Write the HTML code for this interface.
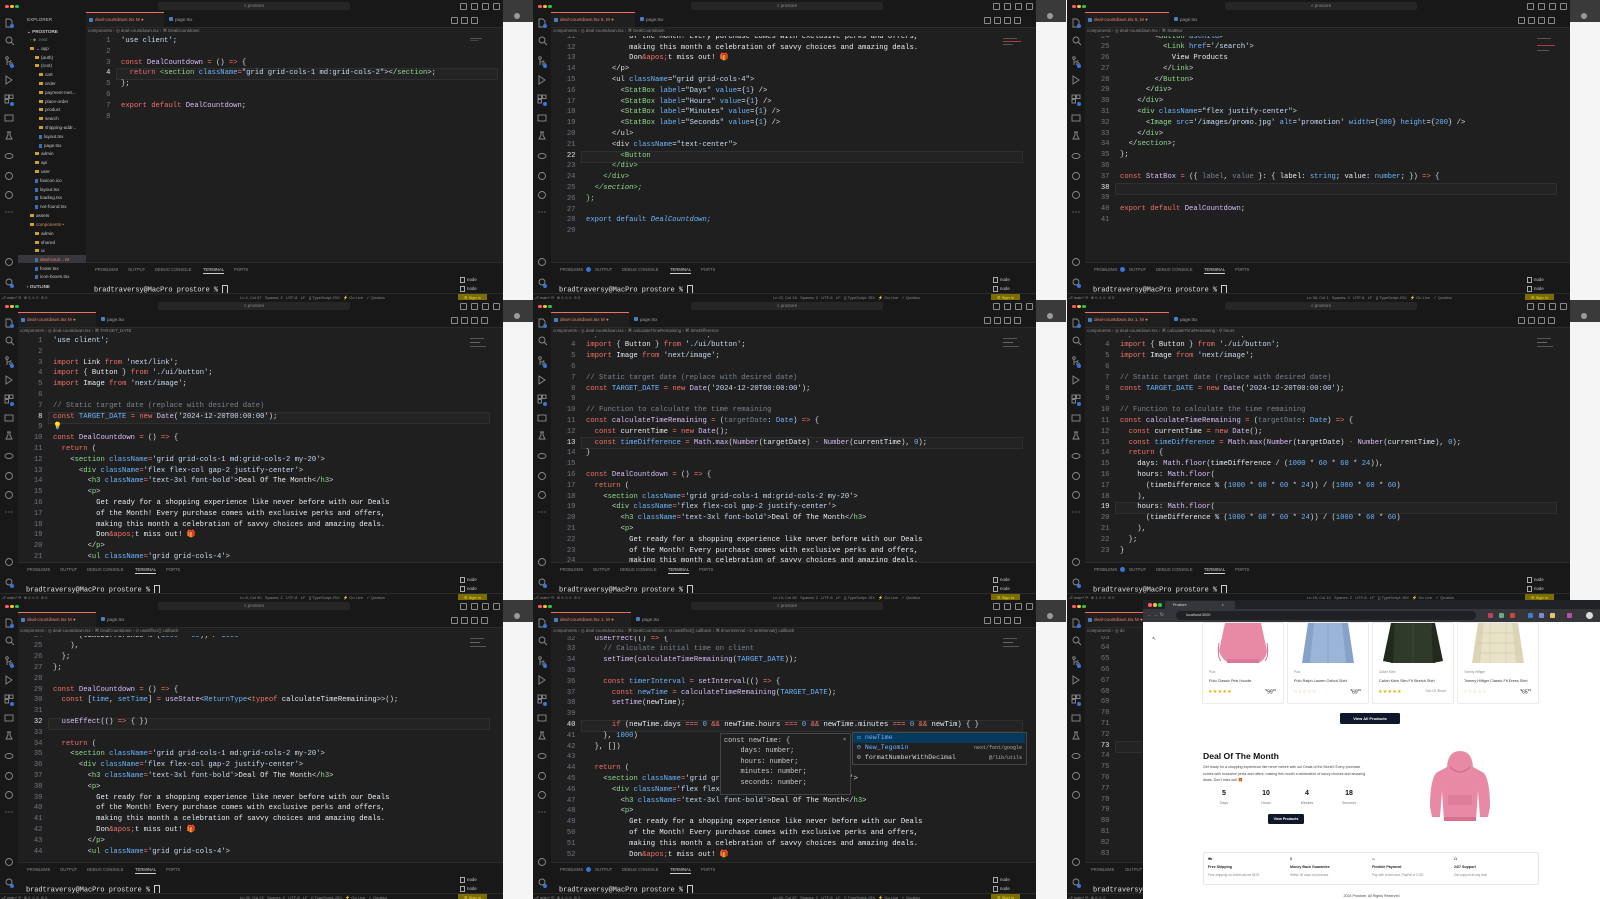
<!DOCTYPE html>
<html><head><meta charset="utf-8">
<style>
body{margin:0;width:1600px;height:899px;overflow:hidden;background:#f2f2f2;position:relative;font-family:"Liberation Sans",sans-serif}
.T{position:absolute;width:533px;height:300px;overflow:hidden}
.G{position:absolute;left:503px;top:0;width:30px;height:300px;background:#f5f5f5}
.G i{position:absolute;left:0;top:0;width:30px;height:22px;background:#3a3a3a}
.G b{position:absolute;left:11px;top:13px;width:6px;height:6px;border-radius:50%;background:#9a9a9a}
.W{position:absolute;left:0;top:0;width:503px;height:300px;background:#1f1f1f;overflow:hidden}
.tb{position:absolute;left:0;top:0;width:503px;height:12px;background:#181818;border-bottom:0.5px solid #2a2a2a}
.l{position:absolute;top:4.5px;width:3.5px;height:3.5px;border-radius:50%}
.srch{position:absolute;left:158px;top:2px;width:192px;height:8px;background:#262626;border-radius:2px;color:#8a8a8a;font-size:4.5px;line-height:8px;text-align:center}
.tbi{position:absolute;top:3px;width:5px;height:5px;border:0.6px solid #8a8a8a;border-radius:1px}
.ab{position:absolute;left:0;top:12px}
.ed{position:absolute;top:12px;right:0;height:281px}
.tabs{position:absolute;left:0;right:0;top:0;height:15px;background:#181818;border-bottom:0.5px solid #2b2b2b}
.tab{position:absolute;top:0;height:15px;font-size:4.6px;line-height:15px;color:#9a9a9a;padding-left:9px;box-sizing:border-box;white-space:nowrap}
.tab.act{background:#1f1f1f;border-top:1px solid #f47067;color:#e8836a;line-height:13px}
.tab::before{content:"";position:absolute;left:3px;top:5px;width:3.5px;height:4px;border-radius:1px;background:#4a7fbf}
.tabs .ic{position:absolute;top:5px;width:5px;height:5px;border:0.6px solid #8a8a8a;border-radius:1px}
.bc{position:absolute;left:2px;top:16px;font-size:4.4px;color:#8b8b8b;white-space:nowrap}
.cd{position:absolute;left:0;right:0;top:24px;height:226px;overflow:hidden}
pre{margin:0;font-family:"Liberation Mono",monospace;font-size:7.2px;line-height:10.8px}
.ln{position:absolute;left:0;width:24.5px;text-align:right;color:#6e7681}
.ln b{color:#e6e6e6;font-weight:normal}
.cx{position:absolute;left:35px;color:#d8dee4;white-space:pre}
.cur{position:absolute;left:30px;width:440px;height:10px;border:0.5px solid #2f2f2f;background:#232323}
.pn{position:absolute;left:0;right:0;top:250px;height:31px;background:#181818;border-top:0.5px solid #2b2b2b}
.pt{position:absolute;top:4px;font-size:4.2px;color:#8a8a8a;white-space:nowrap}
.pt u{text-decoration:none;color:#d0d0d0;border-bottom:0.6px solid #d0d0d0;padding-bottom:1px}
.bd{display:inline-block;width:5px;height:5px;border-radius:50%;background:#3a74d8;vertical-align:middle;margin-left:2px}
.term{position:absolute;left:8px;top:22px;font:6.9px/8px "Liberation Mono",monospace;color:#e4e4e4;white-space:pre}
.term span{display:inline-block;width:3.5px;height:7px;border:0.6px solid #ccc;vertical-align:middle}
.nd{position:absolute;left:460px;font-size:4.4px;color:#c8c8c8}
.nd::before{content:"";display:inline-block;width:3px;height:3.5px;border:0.5px solid #aaa;margin-right:2px;vertical-align:middle}
.sb{position:absolute;left:0;width:503px;top:293px;height:7px;background:#181818;border-top:0.5px solid #2b2b2b;font-size:4px;line-height:7px;color:#8a8a8a;white-space:nowrap}
.sb .r{position:absolute;left:240px}
.sb .si{position:absolute;left:458px;top:0;width:29px;height:7px;background:#7b6d00;color:#f3dc3c;text-align:center}
.mm{position:absolute;left:470px;height:1px}
.k{color:#f47067}.v{color:#6cb6ff}.s{color:#c6ddf7}.t{color:#8ddb8c}.a{color:#6cb6ff}.c{color:#768390}.f{color:#dcbdfb}.n{color:#6cb6ff}.w{color:#e6edf3}
.sd{position:absolute;left:18px;top:12px;width:68px;height:281px;background:#181818;font-size:4.6px;color:#c4c4c4}
.sd div{position:absolute;white-space:nowrap}
.sd .fo::before{content:"";display:inline-block;width:4px;height:3px;background:#c9a227;margin-right:2px;vertical-align:middle}
.sd .fi::before{content:"";display:inline-block;width:3px;height:4px;background:#3f6fb0;margin-right:2px;vertical-align:middle}
/* browser */
.br{position:absolute;left:76px;top:0;width:457px;height:299px;background:#fff;overflow:hidden}
.card{position:absolute;top:22px;width:80px;height:80px;border:0.5px solid #ececec;border-radius:2px;background:#fff}
.card .bn{position:absolute;left:6px;top:47px;font-size:3.2px;color:#888}
.card .nm{position:absolute;left:6px;top:56px;font-size:3.8px;color:#333;white-space:nowrap}
.card .st{position:absolute;left:5px;top:66px;font-size:5px;color:#e6b400;letter-spacing:0.3px}
.card .pr{position:absolute;right:7px;top:65px;font-size:5px;color:#222}
.card .os{position:absolute;right:7px;top:66px;font-size:3.6px;color:#888}
.btn{position:absolute;background:#0f172a;color:#fff;border-radius:1.5px;text-align:center;font-size:4px;font-weight:bold}
.num{position:absolute;width:30px;text-align:center;font-weight:bold;font-size:7px;color:#111}
.lab{position:absolute;width:30px;text-align:center;font-size:3.6px;color:#777}
.ft{position:absolute;font-size:3.6px;color:#222}
</style></head><body>

<!-- ================= TILE r1c1 ================= -->
<div class="T" style="left:0;top:0">
<div class="G"><i></i><b></b></div>
<div class="W">
 <div class="tb"><div class="l" style="left:5px;background:#ff5f57"></div><div class="l" style="left:10px;background:#febc2e"></div><div class="l" style="left:15px;background:#28c840"></div>
 <div class="srch">⌕ prostore</div><div class="tbi" style="left:460px"></div><div class="tbi" style="left:471px"></div><div class="tbi" style="left:482px"></div><div class="tbi" style="left:493px"></div></div>
 <svg class="ab" width="18" height="281"><rect width="18" height="281" fill="#181818"/><g fill="none" stroke="#8b8b8b" stroke-width="0.9"><path d="M6 7h4l2 2v6H6z"/><circle cx="9" cy="28" r="3"/><path d="M11 30l3 3"/><circle cx="7" cy="46" r="1.3"/><circle cx="11" cy="52" r="1.3"/><path d="M7 47v6M7 50q4 0 4-2"/><path d="M6 64l6 4-6 4z"/><rect x="5" y="83" width="3.5" height="3.5"/><rect x="9.5" y="83" width="3.5" height="3.5"/><rect x="5" y="87.5" width="3.5" height="3.5"/><rect x="5" y="103" width="8" height="6"/><path d="M7 120h4M8 120v3l-2 4h6l-2-4v-3"/><ellipse cx="9" cy="144" rx="4" ry="2.5"/><circle cx="9" cy="164" r="3.5"/><circle cx="9" cy="183" r="3.5"/><circle cx="9" cy="250" r="3.5"/><circle cx="9" cy="270" r="3"/></g><g fill="#3a74d8"><circle cx="12" cy="14" r="2"/><circle cx="12" cy="54" r="2"/><circle cx="12" cy="92" r="2"/><circle cx="12" cy="274" r="2"/></g><g fill="#8b8b8b"><circle cx="6" cy="200" r="0.6"/><circle cx="9" cy="200" r="0.6"/><circle cx="12" cy="200" r="0.6"/></g></svg>
 <div class="sd">
  <div style="left:9px;top:5px;color:#bbb">EXPLORER</div>
  <div style="left:9px;top:17px;font-weight:bold">⌄ PROSTORE</div>
  <div style="left:12px;top:25px;color:#777">› ◆ .next</div>
  <div class="fo" style="left:12px;top:34px">⌄ app</div>
  <div class="fo" style="left:17px;top:43px">(auth)</div>
  <div class="fo" style="left:17px;top:51px">(root)</div>
  <div class="fo" style="left:21px;top:60px">cart</div>
  <div class="fo" style="left:21px;top:69px">order</div>
  <div class="fo" style="left:21px;top:78px">payment-met...</div>
  <div class="fo" style="left:21px;top:87px">place-order</div>
  <div class="fo" style="left:21px;top:95px">product</div>
  <div class="fo" style="left:21px;top:104px">search</div>
  <div class="fo" style="left:21px;top:113px">shipping-addr...</div>
  <div class="fi" style="left:21px;top:122px">layout.tsx</div>
  <div class="fi" style="left:21px;top:131px">page.tsx</div>
  <div class="fo" style="left:17px;top:139px">admin</div>
  <div class="fo" style="left:17px;top:148px">api</div>
  <div class="fo" style="left:17px;top:157px">user</div>
  <div class="fi" style="left:17px;top:166px">favicon.ico</div>
  <div class="fi" style="left:17px;top:175px">layout.tsx</div>
  <div class="fi" style="left:17px;top:183px">loading.tsx</div>
  <div class="fi" style="left:17px;top:192px">not-found.tsx</div>
  <div class="fo" style="left:12px;top:201px">assets</div>
  <div class="fo" style="left:12px;top:210px;color:#d9915a">components •</div>
  <div class="fo" style="left:17px;top:219px">admin</div>
  <div class="fo" style="left:17px;top:228px">shared</div>
  <div class="fo" style="left:17px;top:236px">ui</div>
  <div style="left:0;top:243px;width:68px;height:8px;background:#37373d"></div>
  <div class="fi" style="left:17px;top:245px;color:#e8836a">deal-coun... M</div>
  <div class="fi" style="left:17px;top:254px">footer.tsx</div>
  <div class="fi" style="left:17px;top:262px">icon-boxes.tsx</div>
  <div style="left:9px;top:272px;font-weight:bold">› OUTLINE</div>
 </div>
 <div class="ed" style="left:86px">
  <div class="tabs"><div class="tab act" style="left:0;width:78px">deal-countdown.tsx M ●</div><div class="tab" style="left:80px;width:44px">page.tsx</div><div class="ic" style="left:365px"></div><div class="ic" style="left:375px"></div><div class="ic" style="left:385px"></div></div>
  <div class="bc">components › ◎ deal-countdown.tsx › ⌘ DealCountdown</div>
  <div class="cd">
   <div class="cur" style="top:32.4px;width:380px"></div>
   <pre class="ln">1
2
3
<b>4</b>
5
6
7
8</pre>
<pre class="cx"><span class="s">'use client'</span>;

<span class="k">const</span> <span class="f">DealCountdown</span> <span class="k">=</span> () <span class="k">=&gt;</span> {
  <span class="k">return</span> <span class="t">&lt;section</span> <span class="a">className</span><span class="k">=</span><span class="s">"grid grid-cols-1 md:grid-cols-2"</span>&gt;&lt;/<span class="t">section</span>&gt;;
};

<span class="k">export default</span> <span class="f">DealCountdown</span>;
</pre>
  </div>
  <div class="pn"><div class="pt" style="left:9px">PROBLEMS</div><div class="pt" style="left:42px">OUTPUT</div><div class="pt" style="left:69px">DEBUG CONSOLE</div><div class="pt" style="left:117px"><u>TERMINAL</u></div><div class="pt" style="left:148px">PORTS</div>
  <div class="term">bradtraversy@MacPro prostore % <span></span></div></div>
 </div>
 <div class="nd" style="top:277px">node</div><div class="nd" style="top:286px">node</div>
 <div class="mm" style="top:38px;width:12px;background:#555"></div><div class="mm" style="top:40px;width:8px;background:#444"></div>
 <div class="sb">&nbsp;⎇ main* ⟳ &nbsp;⊗ 0 ⚠ 0 &nbsp;⊘ 0<span class="r">Ln 4, Col 87 &nbsp; Spaces: 2 &nbsp; UTF-8 &nbsp; LF &nbsp; {} TypeScript JSX &nbsp; ⚡ Go Live &nbsp; ✓ Quokka</span><span class="si">⚙ Sign in</span></div>
</div></div>

<!-- ================= TILE r1c2 ================= -->
<div class="T" style="left:533px;top:0">
<div class="G"><i></i><b></b></div>
<div class="W">
 <div class="tb"><div class="l" style="left:5px;background:#ff5f57"></div><div class="l" style="left:10px;background:#febc2e"></div><div class="l" style="left:15px;background:#28c840"></div>
 <div class="srch">⌕ prostore</div><div class="tbi" style="left:460px"></div><div class="tbi" style="left:471px"></div><div class="tbi" style="left:482px"></div><div class="tbi" style="left:493px"></div></div>
 <svg class="ab" width="18" height="281"><rect width="18" height="281" fill="#181818"/><g fill="none" stroke="#8b8b8b" stroke-width="0.9"><path d="M6 7h4l2 2v6H6z"/><circle cx="9" cy="28" r="3"/><path d="M11 30l3 3"/><circle cx="7" cy="46" r="1.3"/><circle cx="11" cy="52" r="1.3"/><path d="M7 47v6M7 50q4 0 4-2"/><path d="M6 64l6 4-6 4z"/><rect x="5" y="83" width="3.5" height="3.5"/><rect x="9.5" y="83" width="3.5" height="3.5"/><rect x="5" y="87.5" width="3.5" height="3.5"/><rect x="5" y="103" width="8" height="6"/><path d="M7 120h4M8 120v3l-2 4h6l-2-4v-3"/><ellipse cx="9" cy="144" rx="4" ry="2.5"/><circle cx="9" cy="164" r="3.5"/><circle cx="9" cy="183" r="3.5"/><circle cx="9" cy="250" r="3.5"/><circle cx="9" cy="270" r="3"/></g><g fill="#3a74d8"><circle cx="12" cy="14" r="2"/><circle cx="12" cy="54" r="2"/><circle cx="12" cy="92" r="2"/><circle cx="12" cy="274" r="2"/></g><g fill="#8b8b8b"><circle cx="6" cy="200" r="0.6"/><circle cx="9" cy="200" r="0.6"/><circle cx="12" cy="200" r="0.6"/></g></svg>
 <div class="ed" style="left:18px">
  <div class="tabs"><div class="tab act" style="left:0;width:84px">deal-countdown.tsx 5, M ●</div><div class="tab" style="left:86px;width:44px">page.tsx</div><div class="ic" style="left:433px"></div><div class="ic" style="left:443px"></div><div class="ic" style="left:453px"></div><div class="ic" style="left:463px"></div></div>
  <div class="bc">components › ◎ deal-countdown.tsx › ⌘ DealCountdown</div>
  <div class="cd">
   <div class="cur" style="top:114.5px"></div>
   <pre class="ln" style="margin-top:-4.2px">11
12
13
14
15
16
17
18
19
20
21
<b>22</b>
23
24
25
26
27
28
29</pre>
<pre class="cx" style="margin-top:-4.2px">          <span class="w">of the Month! Every purchase comes with exclusive perks and offers,</span>
          <span class="w">making this month a celebration of savvy choices and amazing deals.</span>
          <span class="w">Don</span><span class="k">&amp;apos;</span><span class="w">t miss out!</span> 🎁
      &lt;/p&gt;
      &lt;ul <span class="a">className</span>=<span class="s">"grid grid-cols-4"</span>&gt;
        &lt;<span class="t">StatBox</span> <span class="a">label</span>=<span class="s">"Days"</span> <span class="a">value</span>={<span class="n">1</span>} /&gt;
        &lt;<span class="t">StatBox</span> <span class="a">label</span>=<span class="s">"Hours"</span> <span class="a">value</span>={<span class="n">1</span>} /&gt;
        &lt;<span class="t">StatBox</span> <span class="a">label</span>=<span class="s">"Minutes"</span> <span class="a">value</span>={<span class="n">1</span>} /&gt;
        &lt;<span class="t">StatBox</span> <span class="a">label</span>=<span class="s">"Seconds"</span> <span class="a">value</span>={<span class="n">1</span>} /&gt;
      &lt;/ul&gt;
      &lt;div <span class="a">className</span>=<span class="s">"text-center"</span>&gt;
        <span class="t">&lt;Button</span>
      <span class="t">&lt;/div&gt;</span>
    <span class="t">&lt;/div&gt;</span>
  <span class="t"><i>&lt;/section&gt;;</i></span>
<span class="t">};</span>

<span class="a">export default</span> <span class="a"><i>DealCountdown;</i></span>
</pre>
  </div>
  <div class="pn"><div class="pt" style="left:9px">PROBLEMS <span class="bd"></span></div><div class="pt" style="left:44px">OUTPUT</div><div class="pt" style="left:71px">DEBUG CONSOLE</div><div class="pt" style="left:119px"><u>TERMINAL</u></div><div class="pt" style="left:150px">PORTS</div>
  <div class="term">bradtraversy@MacPro prostore % <span></span></div></div>
 </div>
 <div class="nd" style="top:277px">node</div><div class="nd" style="top:286px">node</div>
 <div class="mm" style="top:38px;width:14px;background:#555"></div><div class="mm" style="top:41px;width:18px;background:#a04040"></div><div class="mm" style="top:44px;width:10px;background:#555"></div>
 <div class="sb">&nbsp;⎇ main* ⟳ &nbsp;⊗ 0 ⚠ 0 &nbsp;⊘ 5<span class="r">Ln 22, Col 16 &nbsp; Spaces: 2 &nbsp; UTF-8 &nbsp; LF &nbsp; {} TypeScript JSX &nbsp; ⚡ Go Live &nbsp; ✓ Quokka</span><span class="si">⚙ Sign in</span></div>
</div></div>

<!-- ================= TILE r1c3 ================= -->
<div class="T" style="left:1067px;top:0">
<div class="G"><i></i><b></b></div>
<div class="W">
 <div class="tb"><div class="l" style="left:5px;background:#ff5f57"></div><div class="l" style="left:10px;background:#febc2e"></div><div class="l" style="left:15px;background:#28c840"></div>
 <div class="srch">⌕ prostore</div><div class="tbi" style="left:460px"></div><div class="tbi" style="left:471px"></div><div class="tbi" style="left:482px"></div><div class="tbi" style="left:493px"></div></div>
 <svg class="ab" width="18" height="281"><rect width="18" height="281" fill="#181818"/><g fill="none" stroke="#8b8b8b" stroke-width="0.9"><path d="M6 7h4l2 2v6H6z"/><circle cx="9" cy="28" r="3"/><path d="M11 30l3 3"/><circle cx="7" cy="46" r="1.3"/><circle cx="11" cy="52" r="1.3"/><path d="M7 47v6M7 50q4 0 4-2"/><path d="M6 64l6 4-6 4z"/><rect x="5" y="83" width="3.5" height="3.5"/><rect x="9.5" y="83" width="3.5" height="3.5"/><rect x="5" y="87.5" width="3.5" height="3.5"/><rect x="5" y="103" width="8" height="6"/><path d="M7 120h4M8 120v3l-2 4h6l-2-4v-3"/><ellipse cx="9" cy="144" rx="4" ry="2.5"/><circle cx="9" cy="164" r="3.5"/><circle cx="9" cy="183" r="3.5"/><circle cx="9" cy="250" r="3.5"/><circle cx="9" cy="270" r="3"/></g><g fill="#3a74d8"><circle cx="12" cy="14" r="2"/><circle cx="12" cy="54" r="2"/><circle cx="12" cy="92" r="2"/><circle cx="12" cy="274" r="2"/></g><g fill="#8b8b8b"><circle cx="6" cy="200" r="0.6"/><circle cx="9" cy="200" r="0.6"/><circle cx="12" cy="200" r="0.6"/></g></svg>
 <div class="ed" style="left:18px">
  <div class="tabs"><div class="tab act" style="left:0;width:84px">deal-countdown.tsx 5, M ●</div><div class="tab" style="left:86px;width:44px">page.tsx</div><div class="ic" style="left:433px"></div><div class="ic" style="left:443px"></div><div class="ic" style="left:453px"></div><div class="ic" style="left:463px"></div></div>
  <div class="bc">components › ◎ deal-countdown.tsx › ⌘ StatBox</div>
  <div class="cd">
   <div class="cur" style="top:146.7px"></div>
   <pre class="ln" style="margin-top:-4.5px">24
25
26
27
28
29
30
31
32
33
34
35
36
37
<b>38</b>
39
40
41</pre>
<pre class="cx" style="margin-top:-4.5px">        &lt;<span class="t">Button</span> <span class="a">asChild</span>&gt;
          &lt;<span class="t">Link</span> <span class="a">href</span>=<span class="s">'/search'</span>&gt;
            <span class="w">View Products</span>
          &lt;/<span class="t">Link</span>&gt;
        &lt;/<span class="t">Button</span>&gt;
      &lt;/<span class="t">div</span>&gt;
    &lt;/<span class="t">div</span>&gt;
    &lt;<span class="t">div</span> <span class="a">className</span>=<span class="s">"flex justify-center"</span>&gt;
      &lt;<span class="t">Image</span> <span class="a">src</span>=<span class="s">'/images/promo.jpg'</span> <span class="a">alt</span>=<span class="s">'promotion'</span> <span class="a">width</span>={<span class="n">300</span>} <span class="a">height</span>={<span class="n">200</span>} /&gt;
    &lt;/<span class="t">div</span>&gt;
  &lt;/<span class="t">section</span>&gt;;
};

<span class="k">const</span> <span class="f">StatBox</span> <span class="k">=</span> ({ <span class="c">label</span>, <span class="c">value</span> }: { <span class="w">label</span>: <span class="v">string</span>; <span class="w">value</span>: <span class="v">number</span>; }) <span class="k">=&gt;</span> {


<span class="k">export default</span> <span class="f">DealCountdown</span>;
</pre>
  </div>
  <div class="pn"><div class="pt" style="left:9px">PROBLEMS <span class="bd"></span></div><div class="pt" style="left:44px">OUTPUT</div><div class="pt" style="left:71px">DEBUG CONSOLE</div><div class="pt" style="left:119px"><u>TERMINAL</u></div><div class="pt" style="left:150px">PORTS</div>
  <div class="term">bradtraversy@MacPro prostore % <span></span></div></div>
 </div>
 <div class="nd" style="top:277px">node</div><div class="nd" style="top:286px">node</div>
 <div class="mm" style="top:38px;width:14px;background:#555"></div><div class="mm" style="top:45px;width:18px;background:#a04040"></div><div class="mm" style="top:50px;width:12px;background:#555"></div>
 <div class="sb">&nbsp;⎇ main* ⟳ &nbsp;⊗ 0 ⚠ 0 &nbsp;⊘ 5<span class="r">Ln 38, Col 1 &nbsp; Spaces: 2 &nbsp; UTF-8 &nbsp; LF &nbsp; {} TypeScript JSX &nbsp; ⚡ Go Live &nbsp; ✓ Quokka</span><span class="si">⚙ Sign in</span></div>
</div></div>

<!-- ================= TILE r2c1 ================= -->
<div class="T" style="left:0;top:300px">
<div class="G"><i></i><b></b></div>
<div class="W">
 <div class="tb"><div class="l" style="left:5px;background:#ff5f57"></div><div class="l" style="left:10px;background:#febc2e"></div><div class="l" style="left:15px;background:#28c840"></div>
 <div class="srch">⌕ prostore</div><div class="tbi" style="left:460px"></div><div class="tbi" style="left:471px"></div><div class="tbi" style="left:482px"></div><div class="tbi" style="left:493px"></div></div>
 <svg class="ab" width="18" height="281"><rect width="18" height="281" fill="#181818"/><g fill="none" stroke="#8b8b8b" stroke-width="0.9"><path d="M6 7h4l2 2v6H6z"/><circle cx="9" cy="28" r="3"/><path d="M11 30l3 3"/><circle cx="7" cy="46" r="1.3"/><circle cx="11" cy="52" r="1.3"/><path d="M7 47v6M7 50q4 0 4-2"/><path d="M6 64l6 4-6 4z"/><rect x="5" y="83" width="3.5" height="3.5"/><rect x="9.5" y="83" width="3.5" height="3.5"/><rect x="5" y="87.5" width="3.5" height="3.5"/><rect x="5" y="103" width="8" height="6"/><path d="M7 120h4M8 120v3l-2 4h6l-2-4v-3"/><ellipse cx="9" cy="144" rx="4" ry="2.5"/><circle cx="9" cy="164" r="3.5"/><circle cx="9" cy="183" r="3.5"/><circle cx="9" cy="250" r="3.5"/><circle cx="9" cy="270" r="3"/></g><g fill="#3a74d8"><circle cx="12" cy="14" r="2"/><circle cx="12" cy="54" r="2"/><circle cx="12" cy="92" r="2"/><circle cx="12" cy="274" r="2"/></g><g fill="#8b8b8b"><circle cx="6" cy="200" r="0.6"/><circle cx="9" cy="200" r="0.6"/><circle cx="12" cy="200" r="0.6"/></g></svg>
 <div class="ed" style="left:18px">
  <div class="tabs"><div class="tab act" style="left:0;width:78px">deal-countdown.tsx M ●</div><div class="tab" style="left:80px;width:44px">page.tsx</div><div class="ic" style="left:433px"></div><div class="ic" style="left:443px"></div><div class="ic" style="left:453px"></div><div class="ic" style="left:463px"></div></div>
  <div class="bc">components › ◎ deal-countdown.tsx › ⌘ TARGET_DATE</div>
  <div class="cd">
   <div class="cur" style="top:75.6px"></div>
   <pre class="ln">1
2
3
4
5
6
7
<b>8</b>
9
10
11
12
13
14
15
16
17
18
19
20
21</pre>
<pre class="cx"><span class="s">'use client'</span>;

<span class="k">import</span> <span class="w">Link</span> <span class="k">from</span> <span class="s">'next/link'</span>;
<span class="k">import</span> { <span class="w">Button</span> } <span class="k">from</span> <span class="s">'./ui/button'</span>;
<span class="k">import</span> <span class="w">Image</span> <span class="k">from</span> <span class="s">'next/image'</span>;

<span class="c">// Static target date (replace with desired date)</span>
<span class="k">const</span> <span class="v">TARGET_DATE</span> <span class="k">=</span> <span class="k">new</span> <span class="f">Date</span>(<span class="s">'2024-12-20T00:00:00'</span>);
<span style="color:#e6c300">💡</span>
<span class="k">const</span> <span class="f">DealCountdown</span> <span class="k">=</span> () <span class="k">=&gt;</span> {
  <span class="k">return</span> (
    &lt;<span class="t">section</span> <span class="a">className</span><span class="k">=</span><span class="s">'grid grid-cols-1 md:grid-cols-2 my-20'</span>&gt;
      &lt;<span class="t">div</span> <span class="a">className</span><span class="k">=</span><span class="s">'flex flex-col gap-2 justify-center'</span>&gt;
        &lt;<span class="t">h3</span> <span class="a">className</span><span class="k">=</span><span class="s">'text-3xl font-bold'</span>&gt;<span class="w">Deal Of The Month</span>&lt;/<span class="t">h3</span>&gt;
        &lt;<span class="t">p</span>&gt;
          <span class="w">Get ready for a shopping experience like never before with our Deals</span>
          <span class="w">of the Month! Every purchase comes with exclusive perks and offers,</span>
          <span class="w">making this month a celebration of savvy choices and amazing deals.</span>
          <span class="w">Don</span><span class="k">&amp;apos;</span><span class="w">t miss out!</span> 🎁
        &lt;/<span class="t">p</span>&gt;
        &lt;<span class="t">ul</span> <span class="a">className</span><span class="k">=</span><span class="s">'grid grid-cols-4'</span>&gt;
</pre>
  </div>
  <div class="pn"><div class="pt" style="left:9px">PROBLEMS</div><div class="pt" style="left:42px">OUTPUT</div><div class="pt" style="left:69px">DEBUG CONSOLE</div><div class="pt" style="left:117px"><u>TERMINAL</u></div><div class="pt" style="left:148px">PORTS</div>
  <div class="term">bradtraversy@MacPro prostore % <span></span></div></div>
 </div>
 <div class="nd" style="top:277px">node</div><div class="nd" style="top:286px">node</div>
 <div class="mm" style="top:38px;width:14px;background:#555"></div><div class="mm" style="top:42px;width:10px;background:#666"></div><div class="mm" style="top:46px;width:16px;background:#555"></div>
 <div class="sb">&nbsp;⎇ main* ⟳ &nbsp;⊗ 0 ⚠ 0 &nbsp;⊘ 0<span class="r">Ln 8, Col 50 &nbsp; Spaces: 2 &nbsp; UTF-8 &nbsp; LF &nbsp; {} TypeScript JSX &nbsp; ⚡ Go Live &nbsp; ✓ Quokka</span><span class="si">⚙ Sign in</span></div>
</div></div>

<!-- ================= TILE r2c2 ================= -->
<div class="T" style="left:533px;top:300px">
<div class="G"><i></i><b></b></div>
<div class="W">
 <div class="tb"><div class="l" style="left:5px;background:#ff5f57"></div><div class="l" style="left:10px;background:#febc2e"></div><div class="l" style="left:15px;background:#28c840"></div>
 <div class="srch">⌕ prostore</div><div class="tbi" style="left:460px"></div><div class="tbi" style="left:471px"></div><div class="tbi" style="left:482px"></div><div class="tbi" style="left:493px"></div></div>
 <svg class="ab" width="18" height="281"><rect width="18" height="281" fill="#181818"/><g fill="none" stroke="#8b8b8b" stroke-width="0.9"><path d="M6 7h4l2 2v6H6z"/><circle cx="9" cy="28" r="3"/><path d="M11 30l3 3"/><circle cx="7" cy="46" r="1.3"/><circle cx="11" cy="52" r="1.3"/><path d="M7 47v6M7 50q4 0 4-2"/><path d="M6 64l6 4-6 4z"/><rect x="5" y="83" width="3.5" height="3.5"/><rect x="9.5" y="83" width="3.5" height="3.5"/><rect x="5" y="87.5" width="3.5" height="3.5"/><rect x="5" y="103" width="8" height="6"/><path d="M7 120h4M8 120v3l-2 4h6l-2-4v-3"/><ellipse cx="9" cy="144" rx="4" ry="2.5"/><circle cx="9" cy="164" r="3.5"/><circle cx="9" cy="183" r="3.5"/><circle cx="9" cy="250" r="3.5"/><circle cx="9" cy="270" r="3"/></g><g fill="#3a74d8"><circle cx="12" cy="14" r="2"/><circle cx="12" cy="54" r="2"/><circle cx="12" cy="92" r="2"/><circle cx="12" cy="274" r="2"/></g><g fill="#8b8b8b"><circle cx="6" cy="200" r="0.6"/><circle cx="9" cy="200" r="0.6"/><circle cx="12" cy="200" r="0.6"/></g></svg>
 <div class="ed" style="left:18px">
  <div class="tabs"><div class="tab act" style="left:0;width:78px">deal-countdown.tsx M ●</div><div class="tab" style="left:80px;width:44px">page.tsx</div><div class="ic" style="left:433px"></div><div class="ic" style="left:443px"></div><div class="ic" style="left:453px"></div><div class="ic" style="left:463px"></div></div>
  <div class="bc">components › ◎ deal-countdown.tsx › ⌘ calculateTimeRemaining › ⌘ timeDifference</div>
  <div class="cd">
   <div class="cur" style="top:101.4px"></div>
   <pre class="ln" style="margin-top:-6.4px">3
4
5
6
7
8
9
10
11
12
<b>13</b>
14
15
16
17
18
19
20
21
22
23
24</pre>
<pre class="cx" style="margin-top:-6.4px"><span class="k">import</span> <span class="w">Link</span> <span class="k">from</span> <span class="s">'next/link'</span>;
<span class="k">import</span> { <span class="w">Button</span> } <span class="k">from</span> <span class="s">'./ui/button'</span>;
<span class="k">import</span> <span class="w">Image</span> <span class="k">from</span> <span class="s">'next/image'</span>;

<span class="c">// Static target date (replace with desired date)</span>
<span class="k">const</span> <span class="v">TARGET_DATE</span> <span class="k">=</span> <span class="k">new</span> <span class="f">Date</span>(<span class="s">'2024-12-20T00:00:00'</span>);

<span class="c">// Function to calculate the time remaining</span>
<span class="k">const</span> <span class="f">calculateTimeRemaining</span> <span class="k">=</span> (<span class="c">targetDate</span>: <span class="v">Date</span>) <span class="k">=&gt;</span> {
  <span class="k">const</span> <span class="w">currentTime</span> <span class="k">=</span> <span class="k">new</span> <span class="f">Date</span>();
  <span class="k">const</span> <span class="v">timeDifference</span> <span class="k">=</span> <span class="f">Math</span>.<span class="f">max</span>(<span class="f">Number</span>(<span class="w">targetDate</span>) <span class="k">-</span> <span class="f">Number</span>(<span class="w">currentTime</span>), <span class="n">0</span>);
}

<span class="k">const</span> <span class="f">DealCountdown</span> <span class="k">=</span> () <span class="k">=&gt;</span> {
  <span class="k">return</span> (
    &lt;<span class="t">section</span> <span class="a">className</span><span class="k">=</span><span class="s">'grid grid-cols-1 md:grid-cols-2 my-20'</span>&gt;
      &lt;<span class="t">div</span> <span class="a">className</span><span class="k">=</span><span class="s">'flex flex-col gap-2 justify-center'</span>&gt;
        &lt;<span class="t">h3</span> <span class="a">className</span><span class="k">=</span><span class="s">'text-3xl font-bold'</span>&gt;<span class="w">Deal Of The Month</span>&lt;/<span class="t">h3</span>&gt;
        &lt;<span class="t">p</span>&gt;
          <span class="w">Get ready for a shopping experience like never before with our Deals</span>
          <span class="w">of the Month! Every purchase comes with exclusive perks and offers,</span>
          <span class="w">making this month a celebration of savvy choices and amazing deals.</span>
</pre>
  </div>
  <div class="pn"><div class="pt" style="left:9px">PROBLEMS</div><div class="pt" style="left:42px">OUTPUT</div><div class="pt" style="left:69px">DEBUG CONSOLE</div><div class="pt" style="left:117px"><u>TERMINAL</u></div><div class="pt" style="left:148px">PORTS</div>
  <div class="term">bradtraversy@MacPro prostore % <span></span></div></div>
 </div>
 <div class="nd" style="top:277px">node</div><div class="nd" style="top:286px">node</div>
 <div class="mm" style="top:38px;width:14px;background:#555"></div><div class="mm" style="top:42px;width:10px;background:#666"></div><div class="mm" style="top:46px;width:16px;background:#555"></div>
 <div class="sb">&nbsp;⎇ main* ⟳ &nbsp;⊗ 0 ⚠ 0 &nbsp;⊘ 0<span class="r">Ln 13, Col 80 &nbsp; Spaces: 2 &nbsp; UTF-8 &nbsp; LF &nbsp; {} TypeScript JSX &nbsp; ⚡ Go Live &nbsp; ✓ Quokka</span><span class="si">⚙ Sign in</span></div>
</div></div>

<!-- ================= TILE r2c3 ================= -->
<div class="T" style="left:1067px;top:300px">
<div class="G"><i></i><b></b></div>
<div class="W">
 <div class="tb"><div class="l" style="left:5px;background:#ff5f57"></div><div class="l" style="left:10px;background:#febc2e"></div><div class="l" style="left:15px;background:#28c840"></div>
 <div class="srch">⌕ prostore</div><div class="tbi" style="left:460px"></div><div class="tbi" style="left:471px"></div><div class="tbi" style="left:482px"></div><div class="tbi" style="left:493px"></div></div>
 <svg class="ab" width="18" height="281"><rect width="18" height="281" fill="#181818"/><g fill="none" stroke="#8b8b8b" stroke-width="0.9"><path d="M6 7h4l2 2v6H6z"/><circle cx="9" cy="28" r="3"/><path d="M11 30l3 3"/><circle cx="7" cy="46" r="1.3"/><circle cx="11" cy="52" r="1.3"/><path d="M7 47v6M7 50q4 0 4-2"/><path d="M6 64l6 4-6 4z"/><rect x="5" y="83" width="3.5" height="3.5"/><rect x="9.5" y="83" width="3.5" height="3.5"/><rect x="5" y="87.5" width="3.5" height="3.5"/><rect x="5" y="103" width="8" height="6"/><path d="M7 120h4M8 120v3l-2 4h6l-2-4v-3"/><ellipse cx="9" cy="144" rx="4" ry="2.5"/><circle cx="9" cy="164" r="3.5"/><circle cx="9" cy="183" r="3.5"/><circle cx="9" cy="250" r="3.5"/><circle cx="9" cy="270" r="3"/></g><g fill="#3a74d8"><circle cx="12" cy="14" r="2"/><circle cx="12" cy="54" r="2"/><circle cx="12" cy="92" r="2"/><circle cx="12" cy="274" r="2"/></g><g fill="#8b8b8b"><circle cx="6" cy="200" r="0.6"/><circle cx="9" cy="200" r="0.6"/><circle cx="12" cy="200" r="0.6"/></g></svg>
 <div class="ed" style="left:18px">
  <div class="tabs"><div class="tab act" style="left:0;width:84px">deal-countdown.tsx 1, M ●</div><div class="tab" style="left:86px;width:44px">page.tsx</div><div class="ic" style="left:433px"></div><div class="ic" style="left:443px"></div><div class="ic" style="left:453px"></div><div class="ic" style="left:463px"></div></div>
  <div class="bc">components › ◎ deal-countdown.tsx › ⌘ calculateTimeRemaining › ⚲ hours</div>
  <div class="cd">
   <div class="cur" style="top:166.2px"></div>
   <pre class="ln" style="margin-top:-6.4px">3
4
5
6
7
8
9
10
11
12
13
14
15
16
17
18
<b>19</b>
20
21
22
23</pre>
<pre class="cx" style="margin-top:-6.4px"><span class="k">import</span> <span class="w">Link</span> <span class="k">from</span> <span class="s">'next/link'</span>;
<span class="k">import</span> { <span class="w">Button</span> } <span class="k">from</span> <span class="s">'./ui/button'</span>;
<span class="k">import</span> <span class="w">Image</span> <span class="k">from</span> <span class="s">'next/image'</span>;

<span class="c">// Static target date (replace with desired date)</span>
<span class="k">const</span> <span class="v">TARGET_DATE</span> <span class="k">=</span> <span class="k">new</span> <span class="f">Date</span>(<span class="s">'2024-12-20T00:00:00'</span>);

<span class="c">// Function to calculate the time remaining</span>
<span class="k">const</span> <span class="f">calculateTimeRemaining</span> <span class="k">=</span> (<span class="c">targetDate</span>: <span class="v">Date</span>) <span class="k">=&gt;</span> {
  <span class="k">const</span> <span class="w">currentTime</span> <span class="k">=</span> <span class="k">new</span> <span class="f">Date</span>();
  <span class="k">const</span> <span class="v">timeDifference</span> <span class="k">=</span> <span class="f">Math</span>.<span class="f">max</span>(<span class="f">Number</span>(<span class="w">targetDate</span>) <span class="k">-</span> <span class="f">Number</span>(<span class="w">currentTime</span>), <span class="n">0</span>);
  <span class="k">return</span> {
    <span class="w">days</span>: <span class="f">Math</span>.<span class="f">floor</span>(<span class="w">timeDifference</span> / (<span class="n">1000</span> * <span class="n">60</span> * <span class="n">60</span> * <span class="n">24</span>)),
    <span class="w">hours</span>: <span class="f">Math</span>.<span class="f">floor</span>(
      (<span class="w">timeDifference</span> % (<span class="n">1000</span> * <span class="n">60</span> * <span class="n">60</span> * <span class="n">24</span>)) / (<span class="n">1000</span> * <span class="n">60</span> * <span class="n">60</span>)
    ),
    <span class="w">hours</span>: <span class="f">Math</span>.<span class="f">floor</span>(
      (<span class="w">timeDifference</span> % (<span class="n">1000</span> * <span class="n">60</span> * <span class="n">60</span> * <span class="n">24</span>)) / (<span class="n">1000</span> * <span class="n">60</span> * <span class="n">60</span>)
    ),
  };
}
</pre>
  </div>
  <div class="pn"><div class="pt" style="left:9px">PROBLEMS <span class="bd"></span></div><div class="pt" style="left:44px">OUTPUT</div><div class="pt" style="left:71px">DEBUG CONSOLE</div><div class="pt" style="left:119px"><u>TERMINAL</u></div><div class="pt" style="left:150px">PORTS</div>
  <div class="term">bradtraversy@MacPro prostore % <span></span></div></div>
 </div>
 <div class="nd" style="top:277px">node</div><div class="nd" style="top:286px">node</div>
 <div class="mm" style="top:38px;width:14px;background:#555"></div><div class="mm" style="top:42px;width:10px;background:#666"></div><div class="mm" style="top:46px;width:16px;background:#555"></div>
 <div class="sb">&nbsp;⎇ main* ⟳ &nbsp;⊗ 1 ⚠ 0 &nbsp;⊘ 0<span class="r">Ln 19, Col 10 &nbsp; Spaces: 2 &nbsp; UTF-8 &nbsp; LF &nbsp; {} TypeScript JSX &nbsp; ⚡ Go Live &nbsp; ✓ Quokka</span><span class="si">⚙ Sign in</span></div>
</div></div>

<!-- ================= TILE r3c1 ================= -->
<div class="T" style="left:0;top:600px;height:299px">
<div class="G"><i></i><b></b></div>
<div class="W">
 <div class="tb"><div class="l" style="left:5px;background:#ff5f57"></div><div class="l" style="left:10px;background:#febc2e"></div><div class="l" style="left:15px;background:#28c840"></div>
 <div class="srch">⌕ prostore</div><div class="tbi" style="left:460px"></div><div class="tbi" style="left:471px"></div><div class="tbi" style="left:482px"></div><div class="tbi" style="left:493px"></div></div>
 <svg class="ab" width="18" height="281"><rect width="18" height="281" fill="#181818"/><g fill="none" stroke="#8b8b8b" stroke-width="0.9"><path d="M6 7h4l2 2v6H6z"/><circle cx="9" cy="28" r="3"/><path d="M11 30l3 3"/><circle cx="7" cy="46" r="1.3"/><circle cx="11" cy="52" r="1.3"/><path d="M7 47v6M7 50q4 0 4-2"/><path d="M6 64l6 4-6 4z"/><rect x="5" y="83" width="3.5" height="3.5"/><rect x="9.5" y="83" width="3.5" height="3.5"/><rect x="5" y="87.5" width="3.5" height="3.5"/><rect x="5" y="103" width="8" height="6"/><path d="M7 120h4M8 120v3l-2 4h6l-2-4v-3"/><ellipse cx="9" cy="144" rx="4" ry="2.5"/><circle cx="9" cy="164" r="3.5"/><circle cx="9" cy="183" r="3.5"/><circle cx="9" cy="250" r="3.5"/><circle cx="9" cy="270" r="3"/></g><g fill="#3a74d8"><circle cx="12" cy="14" r="2"/><circle cx="12" cy="54" r="2"/><circle cx="12" cy="92" r="2"/><circle cx="12" cy="274" r="2"/></g><g fill="#8b8b8b"><circle cx="6" cy="200" r="0.6"/><circle cx="9" cy="200" r="0.6"/><circle cx="12" cy="200" r="0.6"/></g></svg>
 <div class="ed" style="left:18px">
  <div class="tabs"><div class="tab act" style="left:0;width:78px">deal-countdown.tsx M ●</div><div class="tab" style="left:80px;width:44px">page.tsx</div><div class="ic" style="left:433px"></div><div class="ic" style="left:443px"></div><div class="ic" style="left:453px"></div><div class="ic" style="left:463px"></div></div>
  <div class="bc">components › ◎ deal-countdown.tsx › ⌘ DealCountdown › ⊙ useEffect() callback</div>
  <div class="cd">
   <div class="cur" style="top:81.6px"></div>
   <pre class="ln" style="margin-top:-5.4px">24
25
26
27
28
29
30
31
<b>32</b>
33
34
35
36
37
38
39
40
41
42
43
44</pre>
<pre class="cx" style="margin-top:-5.4px">      (<span class="w">timeDifference</span> % (<span class="n">1000</span> * <span class="n">60</span>)) / <span class="n">1000</span>
    ),
  };
};

<span class="k">const</span> <span class="f">DealCountdown</span> <span class="k">=</span> () <span class="k">=&gt;</span> {
  <span class="k">const</span> [<span class="v">time</span>, <span class="v">setTime</span>] <span class="k">=</span> <span class="f">useState</span>&lt;<span class="v">ReturnType</span>&lt;<span class="k">typeof</span> <span class="w">calculateTimeRemaining</span>&gt;&gt;();

  <span class="f">useEffect</span>(() <span class="k">=&gt;</span> { })

  <span class="k">return</span> (
    &lt;<span class="t">section</span> <span class="a">className</span><span class="k">=</span><span class="s">'grid grid-cols-1 md:grid-cols-2 my-20'</span>&gt;
      &lt;<span class="t">div</span> <span class="a">className</span><span class="k">=</span><span class="s">'flex flex-col gap-2 justify-center'</span>&gt;
        &lt;<span class="t">h3</span> <span class="a">className</span><span class="k">=</span><span class="s">'text-3xl font-bold'</span>&gt;<span class="w">Deal Of The Month</span>&lt;/<span class="t">h3</span>&gt;
        &lt;<span class="t">p</span>&gt;
          <span class="w">Get ready for a shopping experience like never before with our Deals</span>
          <span class="w">of the Month! Every purchase comes with exclusive perks and offers,</span>
          <span class="w">making this month a celebration of savvy choices and amazing deals.</span>
          <span class="w">Don</span><span class="k">&amp;apos;</span><span class="w">t miss out!</span> 🎁
        &lt;/<span class="t">p</span>&gt;
        &lt;<span class="t">ul</span> <span class="a">className</span><span class="k">=</span><span class="s">'grid grid-cols-4'</span>&gt;
</pre>
  </div>
  <div class="pn"><div class="pt" style="left:9px">PROBLEMS</div><div class="pt" style="left:42px">OUTPUT</div><div class="pt" style="left:69px">DEBUG CONSOLE</div><div class="pt" style="left:117px"><u>TERMINAL</u></div><div class="pt" style="left:148px">PORTS</div>
  <div class="term">bradtraversy@MacPro prostore % <span></span></div></div>
 </div>
 <div class="nd" style="top:277px">node</div><div class="nd" style="top:286px">node</div>
 <div class="mm" style="top:38px;width:14px;background:#555"></div><div class="mm" style="top:42px;width:10px;background:#666"></div><div class="mm" style="top:46px;width:16px;background:#555"></div>
 <div class="sb">&nbsp;⎇ main* ⟳ &nbsp;⊗ 0 ⚠ 0 &nbsp;⊘ 0<span class="r">Ln 32, Col 22 &nbsp; Spaces: 2 &nbsp; UTF-8 &nbsp; LF &nbsp; {} TypeScript JSX &nbsp; ⚡ Go Live &nbsp; ✓ Quokka</span><span class="si">⚙ Sign in</span></div>
</div></div>

<!-- ================= TILE r3c2 ================= -->
<div class="T" style="left:533px;top:600px;height:299px">
<div class="G"><i></i><b></b></div>
<div class="W">
 <div class="tb"><div class="l" style="left:5px;background:#ff5f57"></div><div class="l" style="left:10px;background:#febc2e"></div><div class="l" style="left:15px;background:#28c840"></div>
 <div class="srch">⌕ prostore</div><div class="tbi" style="left:460px"></div><div class="tbi" style="left:471px"></div><div class="tbi" style="left:482px"></div><div class="tbi" style="left:493px"></div></div>
 <svg class="ab" width="18" height="281"><rect width="18" height="281" fill="#181818"/><g fill="none" stroke="#8b8b8b" stroke-width="0.9"><path d="M6 7h4l2 2v6H6z"/><circle cx="9" cy="28" r="3"/><path d="M11 30l3 3"/><circle cx="7" cy="46" r="1.3"/><circle cx="11" cy="52" r="1.3"/><path d="M7 47v6M7 50q4 0 4-2"/><path d="M6 64l6 4-6 4z"/><rect x="5" y="83" width="3.5" height="3.5"/><rect x="9.5" y="83" width="3.5" height="3.5"/><rect x="5" y="87.5" width="3.5" height="3.5"/><rect x="5" y="103" width="8" height="6"/><path d="M7 120h4M8 120v3l-2 4h6l-2-4v-3"/><ellipse cx="9" cy="144" rx="4" ry="2.5"/><circle cx="9" cy="164" r="3.5"/><circle cx="9" cy="183" r="3.5"/><circle cx="9" cy="250" r="3.5"/><circle cx="9" cy="270" r="3"/></g><g fill="#3a74d8"><circle cx="12" cy="14" r="2"/><circle cx="12" cy="54" r="2"/><circle cx="12" cy="92" r="2"/><circle cx="12" cy="274" r="2"/></g><g fill="#8b8b8b"><circle cx="6" cy="200" r="0.6"/><circle cx="9" cy="200" r="0.6"/><circle cx="12" cy="200" r="0.6"/></g></svg>
 <div class="ed" style="left:18px">
  <div class="tabs"><div class="tab act" style="left:0;width:80px">deal-countdown.tsx 1, M ●</div><div class="tab" style="left:82px;width:44px">page.tsx</div><div class="ic" style="left:433px"></div><div class="ic" style="left:443px"></div><div class="ic" style="left:453px"></div><div class="ic" style="left:463px"></div></div>
  <div class="bc">components › ◎ deal-countdown.tsx › ⌘ DealCountdown › ⊙ useEffect() callback › ⌘ timerInterval › ⊙ setInterval() callback</div>
  <div class="cd">
   <div class="cur" style="top:84px"></div>
   <pre class="ln" style="margin-top:-2.4px">32
33
34
35
36
37
38
39
<b>40</b>
41
42
43
44
45
46
47
48
49
50
51
52</pre>
<pre class="cx" style="margin-top:-2.4px">  <span class="f">useEffect</span>(() <span class="k">=&gt;</span> {
    <span class="c">// Calculate initial time on client</span>
    <span class="f">setTime</span>(<span class="f">calculateTimeRemaining</span>(<span class="v">TARGET_DATE</span>));

    <span class="k">const</span> <span class="v">timerInterval</span> <span class="k">=</span> <span class="f">setInterval</span>(() <span class="k">=&gt;</span> {
      <span class="k">const</span> <span class="v">newTime</span> <span class="k">=</span> <span class="f">calculateTimeRemaining</span>(<span class="v">TARGET_DATE</span>);
      <span class="f">setTime</span>(<span class="w">newTime</span>);

      <span class="k">if</span> (<span class="w">newTime</span>.<span class="w">days</span> <span class="k">===</span> <span class="n">0</span> <span class="k">&amp;&amp;</span> <span class="w">newTime</span>.<span class="w">hours</span> <span class="k">===</span> <span class="n">0</span> <span class="k">&amp;&amp;</span> <span class="w">newTime</span>.<span class="w">minutes</span> <span class="k">===</span> <span class="n">0</span> <span class="k">&amp;&amp;</span> <span class="w">newTim</span>) { }
    }, <span class="n">1000</span>)
  }, [])

  <span class="k">return</span> (
    &lt;<span class="t">section</span> <span class="a">className</span><span class="k">=</span><span class="s">'grid grid-cols-1 md:grid-cols-2 my-20'</span>&gt;
      &lt;<span class="t">div</span> <span class="a">className</span><span class="k">=</span><span class="s">'flex flex-col gap-2 justify-center'</span>&gt;
        &lt;<span class="t">h3</span> <span class="a">className</span><span class="k">=</span><span class="s">'text-3xl font-bold'</span>&gt;<span class="w">Deal Of The Month</span>&lt;/<span class="t">h3</span>&gt;
        &lt;<span class="t">p</span>&gt;
          <span class="w">Get ready for a shopping experience like never before with our Deals</span>
          <span class="w">of the Month! Every purchase comes with exclusive perks and offers,</span>
          <span class="w">making this month a celebration of savvy choices and amazing deals.</span>
          <span class="w">Don</span><span class="k">&amp;apos;</span><span class="w">t miss out!</span> 🎁
</pre>
   <div style="position:absolute;left:169px;top:97px;width:131px;height:62px;background:#202020;border:0.6px solid #454545;font:6.9px/10.4px 'Liberation Mono',monospace;color:#c8c8c8;white-space:pre;padding:2px 0 0 3px;box-sizing:border-box">const newTime: {
    days: number;
    hours: number;
    minutes: number;
    seconds: number;<span style="position:absolute;right:4px;top:1px;font-size:5px">×</span></div>
   <div style="position:absolute;left:301px;top:96px;width:173px;height:31px;background:#202020;border:0.6px solid #454545;font:6.6px/10px 'Liberation Mono',monospace;color:#d0d0d0;white-space:pre">
<div style="position:absolute;left:0;top:0;width:172px;height:10px;background:#04395e;color:#6cb6ff"> ▭ newTime</div><div style="position:absolute;left:0;top:10px;width:172px;color:#6cb6ff"> ⊖ New_Tegomin<span style="position:absolute;right:3px;color:#aaa;font-size:5px">next/font/google</span></div><div style="position:absolute;left:0;top:20px;width:172px"> ⊙ formatNumberWithDecimal<span style="position:absolute;right:3px;color:#aaa;font-size:5px">@/lib/utils</span></div></div>
  </div>
  <div class="pn"><div class="pt" style="left:9px">PROBLEMS <span class="bd"></span></div><div class="pt" style="left:44px">OUTPUT</div><div class="pt" style="left:71px">DEBUG CONSOLE</div><div class="pt" style="left:119px"><u>TERMINAL</u></div><div class="pt" style="left:150px">PORTS</div>
  <div class="term">bradtraversy@MacPro prostore % <span></span></div></div>
 </div>
 <div class="nd" style="top:277px">node</div><div class="nd" style="top:286px">node</div>
 <div class="mm" style="top:38px;width:14px;background:#555"></div><div class="mm" style="top:42px;width:10px;background:#666"></div><div class="mm" style="top:46px;width:16px;background:#555"></div>
 <div class="sb">&nbsp;⎇ main* ⟳ &nbsp;⊗ 1 ⚠ 0 &nbsp;⊘ 0<span class="r">Ln 40, Col 87 &nbsp; Spaces: 2 &nbsp; UTF-8 &nbsp; LF &nbsp; {} TypeScript JSX &nbsp; ⚡ Go Live &nbsp; ✓ Quokka</span><span class="si">⚙ Sign in</span></div>
</div></div>

<!-- ================= TILE r3c3 ================= -->
<div class="T" style="left:1067px;top:600px;height:299px">
<div class="W">
 <div class="tb"><div class="l" style="left:5px;background:#ff5f57"></div><div class="l" style="left:10px;background:#febc2e"></div><div class="l" style="left:15px;background:#28c840"></div></div>
 <svg class="ab" width="18" height="281"><rect width="18" height="281" fill="#181818"/><g fill="none" stroke="#8b8b8b" stroke-width="0.9"><path d="M6 7h4l2 2v6H6z"/><circle cx="9" cy="28" r="3"/><path d="M11 30l3 3"/><circle cx="7" cy="46" r="1.3"/><circle cx="11" cy="52" r="1.3"/><path d="M7 47v6M7 50q4 0 4-2"/><path d="M6 64l6 4-6 4z"/><rect x="5" y="83" width="3.5" height="3.5"/><rect x="9.5" y="83" width="3.5" height="3.5"/><rect x="5" y="87.5" width="3.5" height="3.5"/><rect x="5" y="103" width="8" height="6"/><path d="M7 120h4M8 120v3l-2 4h6l-2-4v-3"/><ellipse cx="9" cy="144" rx="4" ry="2.5"/><circle cx="9" cy="164" r="3.5"/><circle cx="9" cy="183" r="3.5"/><circle cx="9" cy="250" r="3.5"/><circle cx="9" cy="270" r="3"/></g><g fill="#3a74d8"><circle cx="12" cy="14" r="2"/><circle cx="12" cy="54" r="2"/><circle cx="12" cy="92" r="2"/><circle cx="12" cy="274" r="2"/></g></svg>
 <div class="ed" style="left:18px">
  <div class="tabs"><div class="tab act" style="left:0;width:78px">deal-countdown.tsx M ●</div></div>
  <div class="bc">components › ◎ de</div>
  <div class="cd">
   <div class="cur" style="top:104.6px"></div>
   <pre class="ln" style="margin-top:-3.4px">63
64
65
66
67
68
69
70
71
72
<b>73</b>
74
75
76
77
78
79
80
81
82
83</pre>
  </div>
  <div class="pn"><div class="pt" style="left:6px">PROBLEMS</div><div class="pt" style="left:40px">OUTPUT</div>
  <div class="term">bradtraversy@MacPro prostore % <span></span></div></div>
 </div>
 <div class="sb">&nbsp;⎇ main* ⟳ &nbsp;⊗ 0 ⚠ 0</div>
</div>
<div class="br">
 <div style="position:absolute;left:0;top:0;width:457px;height:9px;background:#202124"></div>
 <div class="l" style="left:5px;top:3px;background:#ff5f57"></div><div class="l" style="left:10px;top:3px;background:#febc2e"></div><div class="l" style="left:15px;top:3px;background:#28c840"></div>
 <div style="position:absolute;left:22px;top:1px;width:70px;height:8px;background:#35363a;border-radius:2px 2px 0 0;font-size:3.6px;color:#ddd;line-height:8px;padding-left:8px;box-sizing:border-box">Prostore <span style="margin-left:34px">×</span></div>
 <div style="position:absolute;left:0;top:9px;width:457px;height:13px;background:#35363a"></div>
 <div style="position:absolute;left:4px;top:12px;font-size:5px;color:#aaa">← → ↻</div>
 <div style="position:absolute;left:33px;top:11px;width:300px;height:9px;background:#202124;border-radius:5px;font-size:3.8px;color:#ddd;line-height:9px;padding-left:10px;box-sizing:border-box">localhost:3000</div>
 <div style="position:absolute;left:345px;top:13px;width:5px;height:5px;background:#c04060;border-radius:1px"></div>
 <div style="position:absolute;left:356px;top:13px;width:5px;height:5px;background:#6a8;border-radius:1px"></div>
 <div style="position:absolute;left:367px;top:13px;width:5px;height:5px;background:#c44;border-radius:1px"></div>
 <div style="position:absolute;left:385px;top:13px;width:5px;height:5px;background:#3a7bd5;border-radius:1px"></div>
 <div style="position:absolute;left:396px;top:13px;width:5px;height:5px;background:#7a8bd5;border-radius:1px"></div>
 <div style="position:absolute;left:407px;top:13px;width:5px;height:5px;background:#e8c46a;border-radius:1px"></div>
 <div style="position:absolute;left:424px;top:13px;width:5px;height:5px;background:#c050a0;border-radius:1px"></div>
 <div style="position:absolute;left:443px;top:12px;width:7px;height:7px;background:#ddd;border-radius:50%"></div>
 <div style="position:absolute;left:9px;top:36px;font-size:5px;color:#333">↖</div>

 <!-- product cards -->
 <div class="card" style="left:59px">
  <svg width="80" height="42" style="position:absolute;left:0;top:0"><path d="M22 0 L16 28 Q20 40 30 40 L52 40 Q62 40 64 28 L58 0 Z" fill="#e88aa6"/><path d="M16 20 Q14 34 18 38 M64 20 Q66 34 62 38" stroke="#d06f8c" fill="none"/><rect x="24" y="36" width="32" height="4" fill="#d9789a"/></svg>
  <div class="bn">Polo</div><div class="nm">Polo Classic Pink Hoodie</div><div class="st">★★★★★</div><div class="pr"><sup style="font-size:3px">$</sup>99<sup style="font-size:3px">99</sup></div>
 </div>
 <div class="card" style="left:144px">
  <svg width="80" height="42" style="position:absolute;left:0;top:0"><path d="M24 0 L20 40 L60 40 L56 0 Z" fill="#9bb5d8"/><path d="M20 0 L14 40 L22 40 L26 0Z M60 0 L66 40 L58 40 L54 0Z" fill="#87a2c8"/><line x1="40" y1="0" x2="40" y2="40" stroke="#7f98bd" stroke-width="0.6"/></svg>
  <div class="bn">Polo</div><div class="nm">Polo Ralph Lauren Oxford Shirt</div><div class="st" style="color:#d9c080">☆☆☆☆☆</div><div class="pr"><sup style="font-size:3px">$</sup>69<sup style="font-size:3px">99</sup></div>
 </div>
 <div class="card" style="left:229px">
  <svg width="80" height="42" style="position:absolute;left:0;top:0"><path d="M22 0 L18 40 L62 40 L58 0 Z" fill="#2f3a2a"/><path d="M18 0 L10 38 L20 40 L22 0Z M62 0 L70 38 L60 40 L58 0Z" fill="#222a1e"/><line x1="40" y1="0" x2="40" y2="40" stroke="#555" stroke-width="0.5"/></svg>
  <div class="bn">Calvin Klein</div><div class="nm">Calvin Klein Slim Fit Stretch Shirt</div><div class="st">★★★★★</div><div class="os">Out Of Stock</div>
 </div>
 <div class="card" style="left:314px">
  <svg width="80" height="42" style="position:absolute;left:0;top:0"><path d="M24 0 L20 40 L60 40 L56 0 Z" fill="#e8e2c8"/><path d="M20 0 L14 40 L22 40 L26 0Z M60 0 L66 40 L58 40 L54 0Z" fill="#dcd5b5"/><g stroke="#c8bf98" stroke-width="0.4"><line x1="20" y1="10" x2="60" y2="10"/><line x1="20" y1="20" x2="60" y2="20"/><line x1="20" y1="30" x2="60" y2="30"/><line x1="32" y1="0" x2="32" y2="40"/><line x1="48" y1="0" x2="48" y2="40"/></g></svg>
  <div class="bn">Tommy Hilfiger</div><div class="nm">Tommy Hilfiger Classic Fit Dress Shirt</div><div class="st" style="color:#d9c080">☆☆☆☆☆</div><div class="pr"><sup style="font-size:3px">$</sup>65<sup style="font-size:3px">99</sup></div>
 </div>
 <div class="btn" style="left:197px;top:113px;width:60px;height:11px;line-height:11px">View All Products</div>

 <div style="position:absolute;left:60px;top:151px;font-size:8.6px;font-weight:bold;color:#111">Deal Of The Month</div>
 <div style="position:absolute;left:60px;top:164px;width:165px;font-size:3.6px;line-height:6.5px;color:#444">Get ready for a shopping experience like never before with our Deals of the Month! Every purchase comes with exclusive perks and offers, making this month a celebration of savvy choices and amazing deals. Don't miss out! 🎁</div>
 <div class="num" style="left:66px;top:190px">5</div><div class="num" style="left:108px;top:190px">10</div><div class="num" style="left:149px;top:190px">4</div><div class="num" style="left:191px;top:190px">18</div>
 <div class="lab" style="left:66px;top:201px">Days</div><div class="lab" style="left:108px;top:201px">Hours</div><div class="lab" style="left:149px;top:201px">Minutes</div><div class="lab" style="left:191px;top:201px">Seconds</div>
 <div class="btn" style="left:125px;top:214px;width:36px;height:10px;line-height:10px;font-size:3.6px">View Products</div>
 <svg width="80" height="80" style="position:absolute;left:277px;top:147px"><path d="M40 4 Q28 4 27 20 L16 26 Q10 34 10 60 L12 70 L20 70 L22 44 L24 74 L56 74 L58 44 L60 70 L68 70 L70 60 Q70 34 64 26 L53 20 Q52 4 40 4Z" fill="#e88aa6"/><path d="M30 20 Q40 30 50 20" stroke="#c96a88" fill="none" stroke-width="1"/><rect x="28" y="48" width="24" height="10" rx="2" fill="#de7d9b"/><rect x="24" y="70" width="32" height="4" fill="#d6728f"/></svg>

 <div style="position:absolute;left:60px;top:252px;width:334px;height:31px;border:0.5px solid #e6e6e6;border-radius:2px"></div>
 <div class="ft" style="left:65px;top:257px">⛟</div><div class="ft" style="left:65px;top:265px;font-weight:bold">Free Shipping</div><div class="ft" style="left:65px;top:273px;color:#888;font-size:3.2px">Free shipping on orders above $100</div>
 <div class="ft" style="left:147px;top:257px">$</div><div class="ft" style="left:147px;top:265px;font-weight:bold">Money Back Guarantee</div><div class="ft" style="left:147px;top:273px;color:#888;font-size:3.2px">Within 30 days of purchase</div>
 <div class="ft" style="left:229px;top:257px">▭</div><div class="ft" style="left:229px;top:265px;font-weight:bold">Flexible Payment</div><div class="ft" style="left:229px;top:273px;color:#888;font-size:3.2px">Pay with credit card, PayPal or COD</div>
 <div class="ft" style="left:311px;top:257px">☊</div><div class="ft" style="left:311px;top:265px;font-weight:bold">24/7 Support</div><div class="ft" style="left:311px;top:273px;color:#888;font-size:3.2px">Get support at any time</div>
 <div style="position:absolute;left:0;width:457px;top:294px;text-align:center;font-size:3.6px;color:#444">2024 Prostore. All Rights Reserved</div>
</div>
</div>

</body></html>
